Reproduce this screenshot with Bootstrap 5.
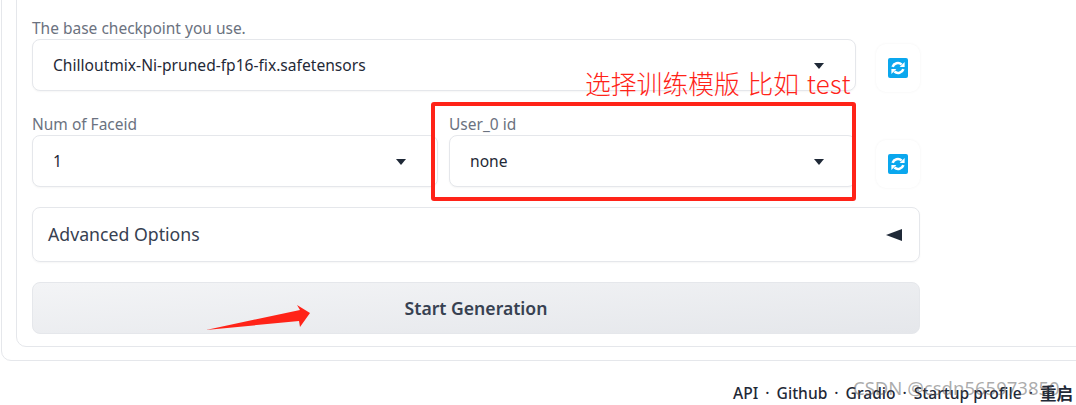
<!doctype html>
<html lang="en">
<head>
<meta charset="utf-8">
<title>Generation</title>
<link href="https://cdn.jsdelivr.net/npm/bootstrap@5.3.0/dist/css/bootstrap.min.css" rel="stylesheet">
<style>
html,body{height:405px;overflow:hidden;background:#fff}
body{font-family:"Noto Sans","Liberation Sans",sans-serif;color:#374151;position:relative}
.shell-out{margin:-30px -40px 0 1px;height:391px;border:1px solid #e5e7eb;border-radius:10px;padding:0 0 13px 14px}
.shell-in{height:100%;border:1px solid #e5e7eb;border-radius:10px;padding:47px 0 0 15px;width:1100px}
.stack{width:888px}
.field-label{font-size:15.5px;line-height:18px;height:18px;color:#6b7280;margin-bottom:2px}
.picker{height:52px;border:1px solid #e5e7eb;border-radius:8px;padding:1px 31px 0 20px;background:#fff;font-size:15.6px;color:#1f2937;box-shadow:0 1px 2px rgba(0,0,0,.04)}
.caret-down{width:0;height:0;border-left:5px solid transparent;border-right:5px solid transparent;border-top:6px solid #1f2937}
.field-main{width:824px}
.pair{display:grid;grid-template-columns:406px 407px;column-gap:11px;width:824px}
.refresh{width:44px;height:48px;padding:0;border:0;border-radius:10px;background:#fff;box-shadow:0 0 3px rgba(0,0,0,.05);margin-bottom:-1px}
.row-gap{margin-top:24px}
.adv{height:55px;margin-top:20px;border:1px solid #e5e7eb;border-radius:8px;padding:0 17px 0 15px;font-size:17.7px;color:#374151;box-shadow:0 1px 2px rgba(0,0,0,.04)}
.caret-left{width:0;height:0;border-top:6.5px solid transparent;border-bottom:6.5px solid transparent;border-right:16px solid #1f2937}
.go{display:block;width:100%;height:52px;margin-top:20px;border:1px solid #e5e7eb;border-radius:8px;background:linear-gradient(to bottom right,#f3f4f6,#e5e7eb);font-weight:600;font-size:17.6px;color:#374151}
.foot{margin-top:22px;padding-right:3px;font-size:15.6px;font-weight:500;line-height:20px;color:#1f2937;gap:7px}
.foot a{color:inherit;text-decoration:none}
.foot-cjk{font-family:"Noto Sans CJK SC",sans-serif;font-size:16.5px;font-weight:700}
.red-box{position:absolute;left:431px;top:102px;width:425px;height:99px;border:4px solid #ff2318;border-radius:3px;pointer-events:none}
.red-note{position:absolute;left:585px;top:65px;font-family:"Noto Sans CJK SC",sans-serif;font-weight:300;font-size:25.8px;line-height:36px;word-spacing:2px;color:#ff2318;white-space:nowrap}
.note-end{letter-spacing:.3px}
.red-arrow{position:absolute;left:205px;top:304px}
.mark-csdn{position:absolute;left:853px;top:377px;font-size:18.5px;line-height:22px;color:rgba(90,90,90,.5);white-space:nowrap}
</style>
</head>
<body>
<div class="shell-out">
  <div class="shell-in">
    <div class="stack">
      <div class="d-flex align-items-end gap-3 justify-content-between">
        <div class="field-main">
          <div class="field-label">The base checkpoint you use.</div>
          <div class="picker d-flex align-items-center justify-content-between"><span>Chilloutmix-Ni-pruned-fp16-fix.safetensors</span><span class="caret-down"></span></div>
        </div>
        <button class="refresh d-flex align-items-center justify-content-center" type="button" aria-label="Refresh"><svg width="20" height="20" viewBox="0 0 20 20"><rect width="20" height="20" rx="2" fill="#0aa7ee"/><path d="M4.6 8.8A5.6 5.6 0 0 1 13.6 6.4" fill="none" stroke="#fff" stroke-width="2.6"/><path d="M11.6 9H16.6V4z" fill="#fff"/><path d="M15.4 11.2A5.6 5.6 0 0 1 6.4 13.6" fill="none" stroke="#fff" stroke-width="2.6"/><path d="M8.4 11H3.4v5z" fill="#fff"/></svg></button>
      </div>
      <div class="d-flex align-items-end gap-3 justify-content-between row-gap">
        <div class="pair">
          <div>
            <div class="field-label">Num of Faceid</div>
            <div class="picker d-flex align-items-center justify-content-between"><span>1</span><span class="caret-down"></span></div>
          </div>
          <div>
            <div class="field-label">User_0 id</div>
            <div class="picker d-flex align-items-center justify-content-between"><span>none</span><span class="caret-down"></span></div>
          </div>
        </div>
        <button class="refresh d-flex align-items-center justify-content-center" type="button" aria-label="Refresh"><svg width="20" height="20" viewBox="0 0 20 20"><rect width="20" height="20" rx="2" fill="#0aa7ee"/><path d="M4.6 8.8A5.6 5.6 0 0 1 13.6 6.4" fill="none" stroke="#fff" stroke-width="2.6"/><path d="M11.6 9H16.6V4z" fill="#fff"/><path d="M15.4 11.2A5.6 5.6 0 0 1 6.4 13.6" fill="none" stroke="#fff" stroke-width="2.6"/><path d="M8.4 11H3.4v5z" fill="#fff"/></svg></button>
      </div>
      <div class="adv d-flex align-items-center justify-content-between"><span>Advanced Options</span><span class="caret-left"></span></div>
      <button class="go" type="button">Start Generation</button>
    </div>
  </div>
</div>
<div class="foot d-flex justify-content-end align-items-center">
  <a href="#">API</a><span>·</span><a href="#">Github</a><span>·</span><a href="#">Gradio</a><span>·</span><a href="#">Startup profile</a><span>·</span><a href="#" class="foot-cjk">重启</a>
</div>
<div class="red-box"></div>
<div class="red-note">选择训练模版 比如 <span class="note-end">test</span></div>
<svg class="red-arrow" width="106" height="28" viewBox="0 0 106 28"><path d="M1 26 L95 6 L92 1 L105 9 L95 23 L94 17z" fill="#ff2318"/></svg>
<div class="mark-csdn">CSDN @csdn565973850</div>
<script src="https://cdn.jsdelivr.net/npm/bootstrap@5.3.0/dist/js/bootstrap.bundle.min.js"></script>
</body>
</html>
